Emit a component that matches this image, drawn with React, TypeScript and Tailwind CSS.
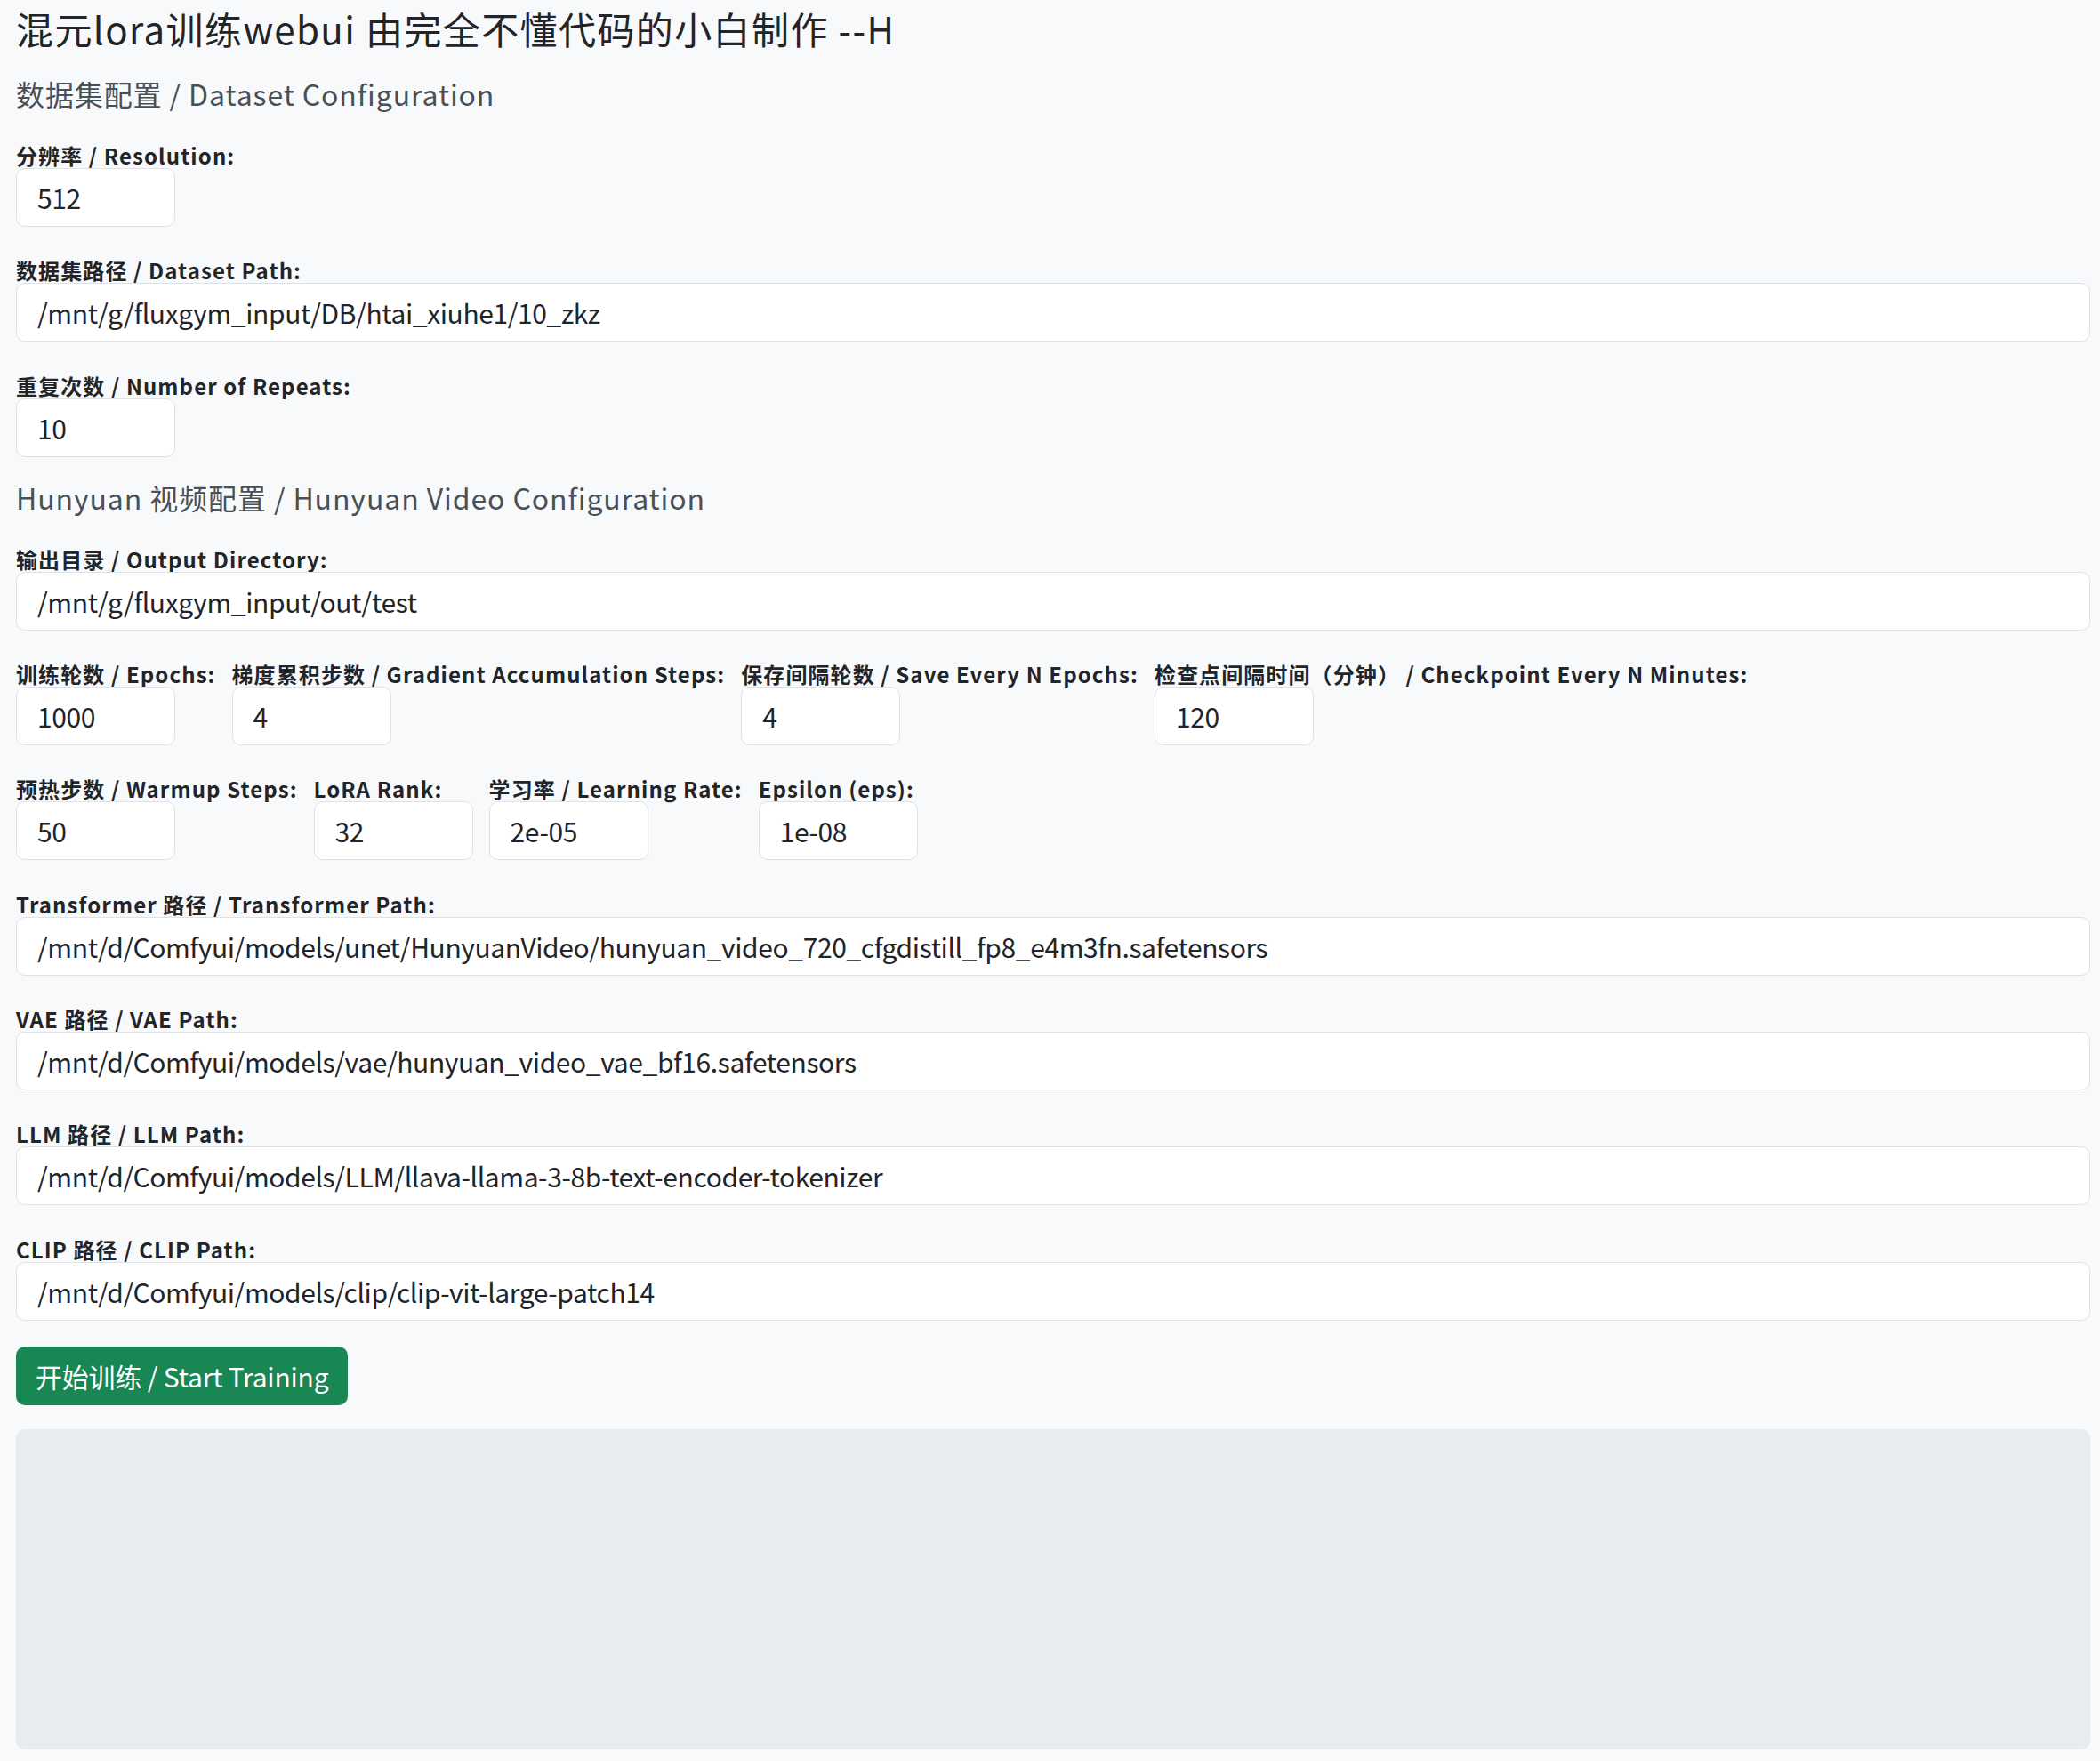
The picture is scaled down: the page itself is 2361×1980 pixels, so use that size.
import React from "react";

const FONT = '"Noto Sans CJK SC", "Noto Sans", sans-serif';

function Label({ text }: { text: string }) {
  return (
    <label className="block whitespace-nowrap text-[24px] leading-[28px] font-bold tracking-[1.1px] text-[#212529]">
      {text}
    </label>
  );
}

function Field({ label, value, full }: { label: string; value: string; full?: boolean }) {
  return (
    <div className="flex flex-col">
      <Label text={label} />
      <input
        type="text"
        defaultValue={value}
        className={
          (full ? "w-full " : "w-[179px] ") +
          "h-[66px] rounded-[10px] border border-[#dee2e6] bg-white px-[23px] text-[30px] tracking-[-0.4px] text-[#212529] outline-none"
        }
        style={{ fontFamily: FONT }}
      />
    </div>
  );
}

function Heading({ text }: { text: string }) {
  return (
    <h4 className="-mt-[3px] mb-[43px] text-[32px] leading-[26px] font-normal tracking-[0.9px] text-[#495057]">
      {text}
    </h4>
  );
}

export default function App() {
  return (
    <div
      className="min-h-[1980px] w-full bg-[#f8f9fa] pl-[18px] pr-[11px] pt-[7px] pb-[13px] text-[#212529]"
      style={{ fontFamily: FONT }}
    >
      <h1 className="mb-[38px] text-[42px] leading-[50px] font-normal tracking-[1.4px] text-[#212529]">
        混元lora训练webui 由完全不懂代码的小白制作 --H
      </h1>

      <Heading text="数据集配置 / Dataset Configuration" />

      <div className="mb-[35.3px]">
        <Field label="分辨率 / Resolution:" value="512" />
      </div>
      <div className="mb-[35.3px]">
        <Field label="数据集路径 / Dataset Path:" value="/mnt/g/fluxgym_input/DB/htai_xiuhe1/10_zkz" full />
      </div>
      <div className="mb-[35.3px]">
        <Field label="重复次数 / Number of Repeats:" value="10" />
      </div>

      <Heading text="Hunyuan 视频配置 / Hunyuan Video Configuration" />

      <div className="mb-[35.3px]">
        <Field label="输出目录 / Output Directory:" value="/mnt/g/fluxgym_input/out/test" full />
      </div>

      <div className="mb-[35.3px] flex gap-[18px]">
        <Field label="训练轮数 / Epochs:" value="1000" />
        <Field label="梯度累积步数 / Gradient Accumulation Steps:" value="4" />
        <Field label="保存间隔轮数 / Save Every N Epochs:" value="4" />
        <Field label="检查点间隔时间（分钟） / Checkpoint Every N Minutes:" value="120" />
      </div>

      <div className="mb-[35.3px] flex gap-[18px]">
        <Field label="预热步数 / Warmup Steps:" value="50" />
        <Field label="LoRA Rank:" value="32" />
        <Field label="学习率 / Learning Rate:" value="2e-05" />
        <Field label="Epsilon (eps):" value="1e-08" />
      </div>

      <div className="mb-[35.3px]">
        <Field
          label="Transformer 路径 / Transformer Path:"
          value="/mnt/d/Comfyui/models/unet/HunyuanVideo/hunyuan_video_720_cfgdistill_fp8_e4m3fn.safetensors"
          full
        />
      </div>
      <div className="mb-[35.3px]">
        <Field label="VAE 路径 / VAE Path:" value="/mnt/d/Comfyui/models/vae/hunyuan_video_vae_bf16.safetensors" full />
      </div>
      <div className="mb-[35.3px]">
        <Field label="LLM 路径 / LLM Path:" value="/mnt/d/Comfyui/models/LLM/llava-llama-3-8b-text-encoder-tokenizer" full />
      </div>
      <div>
        <Field label="CLIP 路径 / CLIP Path:" value="/mnt/d/Comfyui/models/clip/clip-vit-large-patch14" full />
      </div>

      <button
        type="button"
        className="mt-[29px] h-[66px] rounded-[10px] bg-[#198754] px-[22px] text-[30px] leading-[36px] tracking-[-0.2px] text-white"
      >
        开始训练 / Start Training
      </button>

      <div className="mt-[27px] h-[360px] w-full rounded-[10px] bg-[#e9ecef]"></div>
    </div>
  );
}
